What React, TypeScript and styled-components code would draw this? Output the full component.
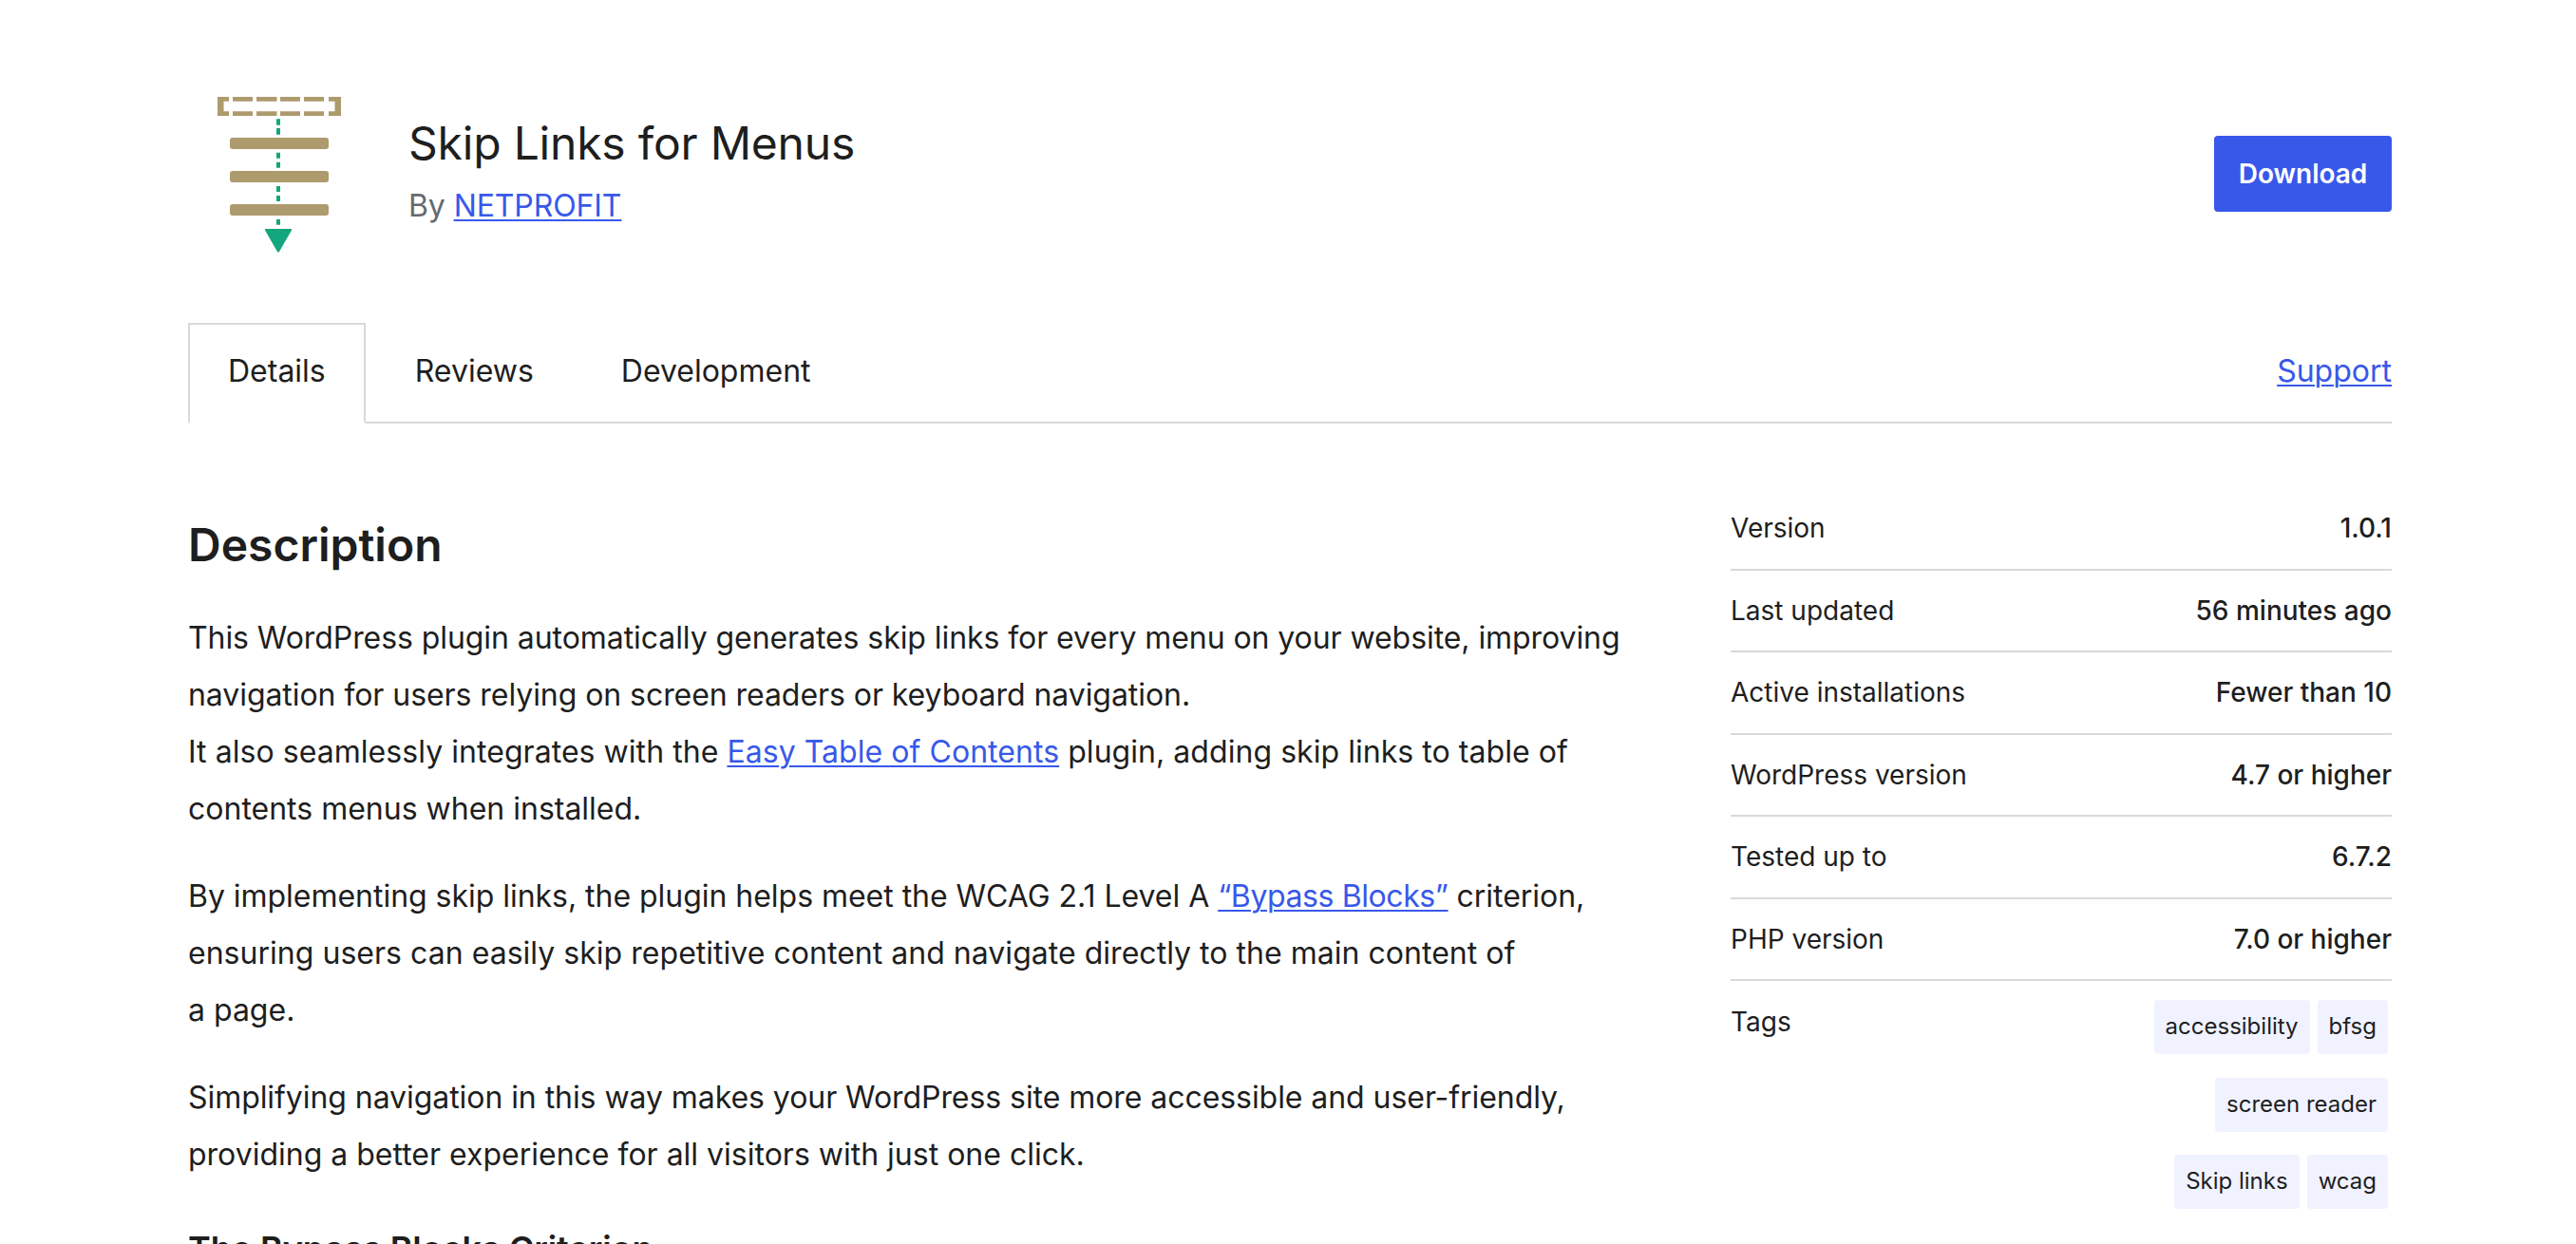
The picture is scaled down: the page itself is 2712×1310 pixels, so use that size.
import React from "react";
import styled, { createGlobalStyle } from "styled-components";

const Global = createGlobalStyle`
  html, body { margin: 0; padding: 0; background: #fff; height: 1310px; overflow: hidden; }
  body { font-family: Inter, "Liberation Sans", sans-serif; color: #1e1e1e; font-size: 32px; }
  a { color: #3858e9; text-decoration: underline; text-underline-offset: 3px; text-decoration-thickness: 2px; }
`;
const Page = styled.div`
  width: 2320px;
  margin: 0 0 0 198px;
  padding: 80px 0 0;
  height: 1230px;
  overflow: hidden;
`;
const Header = styled.header`
  display: flex;
  align-items: center;
  height: 206px;
`;
const Icon = styled.svg`
  width: 232px;
  height: 206px;
  flex: none;
`;
const Heading = styled.div`
  flex: 1;
  margin-top: -13px;
`;
const Title = styled.h1`
  margin: 0 0 8px;
  font-size: 48px;
  font-weight: 400;
  line-height: 72px;
  letter-spacing: -0.2px;
`;
const Byline = styled.div`
  font-size: 32px;
  line-height: 44px;
  color: #656a71;
  letter-spacing: -0.1px;
`;
const DownloadButton = styled.button`
  width: 187px;
  height: 80px;
  border: 0;
  border-radius: 4px;
  background: #3858e9;
  color: #fff;
  font: 600 28px Inter, sans-serif;
`;
const Tabs = styled.nav`
  display: flex;
  align-items: stretch;
  height: 104px;
  margin-top: 54px;
  border-bottom: 2px solid #d9d9d9;
`;
const Tab = styled.div<{ $active?: boolean }>`
  padding: 0 ${(p) => (p.$active ? 40 : 46)}px;
  font-size: 32px;
  line-height: ${(p) => (p.$active ? 98 : 102)}px;
  ${(p) => p.$active && `
    border: 2px solid #d9d9d9;
    border-bottom: 2px solid #fff;
    margin-bottom: -2px;
    margin-right: 6px;
  `}
`;
const SupportLink = styled.a`
  margin-left: auto;
  line-height: 102px;
`;
const Columns = styled.div`
  display: flex;
  justify-content: space-between;
  margin-top: 60px;
`;
const Main = styled.main`
  width: 1520px;
  padding-top: 33px;
`;
const SectionTitle = styled.h2`
  margin: 0 0 33px;
  font-size: 48px;
  font-weight: 600;
  line-height: 70px;
`;
const Para = styled.p`
  margin: 0 0 32px;
  font-size: 32px;
  line-height: 60px;
`;
const Line = styled.span<{ $track?: number }>`
  display: block;
  letter-spacing: ${(p) => p.$track ?? 0}px;
`;
const QuoteLink = styled.a`
  letter-spacing: -0.4px;
`;
const SubTitle = styled.h3`
  margin: 39px 0 0;
  font-size: 36px;
  font-weight: 600;
  line-height: 60px;
  letter-spacing: -0.05px;
`;
const Side = styled.aside`
  width: 696px;
  padding-top: 8px;
`;
const Row = styled.div`
  display: flex;
  justify-content: space-between;
  align-items: center;
  height: 84.5px;
  border-bottom: 2px solid #d9d9d9;
  font-size: 28px;
`;
const Value = styled.span`
  font-weight: 500;
`;
const TagRow = styled.div`
  display: flex;
  justify-content: space-between;
  padding-top: 20px;
`;
const TagLabel = styled.span`
  font-size: 28px;
  padding-top: 6px;
`;
const TagList = styled.div`
  width: 300px;
  display: flex;
  flex-wrap: wrap;
  justify-content: flex-end;
  gap: 24.5px 8px;
  padding-right: 4px;
`;
const Tag = styled.span`
  height: 57px;
  line-height: 56px;
  padding: 0 12px;
  background: #f0f2ff;
  border-radius: 4px;
  font-size: 24px;
`;

const rows = [
  ["Version", "1.0.1"],
  ["Last updated", "56 minutes ago"],
  ["Active installations", "Fewer than 10"],
  ["WordPress version", "4.7 or higher"],
  ["Tested up to", "6.7.2"],
  ["PHP version", "7.0 or higher"],
];

export default function App() {
  return (
    <>
      <Global />
      <Page>
        <Header>
          <Icon viewBox="198 80 232 206">
            <path
              d="M229 104.400H241M229 119.600H241M346 104.400H359M346 119.600H359"
              fill="none"
              stroke="#ad9a6d"
              strokeWidth="4.700"
            />
            <rect x="229" y="102" width="6.500" height="20" rx="2" fill="#ad9a6d" />
            <rect x="352.500" y="102" width="6.500" height="20" rx="2" fill="#ad9a6d" />
            <path
              d="M245 104.400H266M270 104.400H291.500M295 104.400H316M320 104.400H341M245 119.600H266M270 119.600H291.500M295 119.600H316M320 119.600H341"
              fill="none"
              stroke="#ad9a6d"
              strokeWidth="4.700"
            />
            <path
              d="M293 125.300V131.700M293 135V141.700M293 160.700V166.700M293 170.700V176.700M293 196V202M293 206V212M293 231V236.700"
              fill="none"
              stroke="#14a67d"
              strokeWidth="4"
            />
            <rect x="242" y="145" width="104" height="12" rx="3" fill="#ad9a6d" />
            <rect x="242" y="180" width="104" height="12" rx="3" fill="#ad9a6d" />
            <rect x="242" y="215" width="104" height="12" rx="3" fill="#ad9a6d" />
            <path d="M280 241H306Q307.500 241 307 242.500L294 265Q293 266.500 292 265L279 242.500Q278.500 241 280 241Z" fill="#14a67d" />
          </Icon>
          <Heading>
            <Title>Skip Links for Menus</Title>
            <Byline>By <a>NETPROFIT</a></Byline>
          </Heading>
          <DownloadButton>Download</DownloadButton>
        </Header>
        <Tabs>
          <Tab $active>Details</Tab>
          <Tab>Reviews</Tab>
          <Tab>Development</Tab>
          <SupportLink>Support</SupportLink>
        </Tabs>
        <Columns>
          <Main>
            <SectionTitle>Description</SectionTitle>
            <Para>
              <Line $track={-0.07}>This WordPress plugin automatically generates skip links for every menu on your website, improving</Line>
              <Line $track={-0.06}>navigation for users relying on screen readers or keyboard navigation.</Line>
              <Line $track={0.05}>It also seamlessly integrates with the <a>Easy Table of Contents</a> plugin, adding skip links to table of</Line>
              <Line>contents menus when installed.</Line>
            </Para>
            <Para>
              <Line $track={-0.03}>By implementing skip links, the plugin helps meet the WCAG 2.1 Level A <QuoteLink>“Bypass Blocks”</QuoteLink> criterion,</Line>
              <Line $track={0.03}>ensuring users can easily skip repetitive content and navigate directly to the main content of</Line>
              <Line>a page.</Line>
            </Para>
            <Para>
              <Line $track={-0.06}>Simplifying navigation in this way makes your WordPress site more accessible and user-friendly,</Line>
              <Line>providing a better experience for all visitors with just one click.</Line>
            </Para>
            <SubTitle>The Bypass Blocks Criterion</SubTitle>
          </Main>
          <Side>
            {rows.map(([k, v]) => (
              <Row key={k}><span>{k}</span><Value>{v}</Value></Row>
            ))}
            <TagRow>
              <TagLabel>Tags</TagLabel>
              <TagList>
                <Tag>accessibility</Tag><Tag>bfsg</Tag><Tag>screen reader</Tag><Tag>Skip links</Tag><Tag>wcag</Tag>
              </TagList>
            </TagRow>
          </Side>
        </Columns>
      </Page>
    </>
  );
}
